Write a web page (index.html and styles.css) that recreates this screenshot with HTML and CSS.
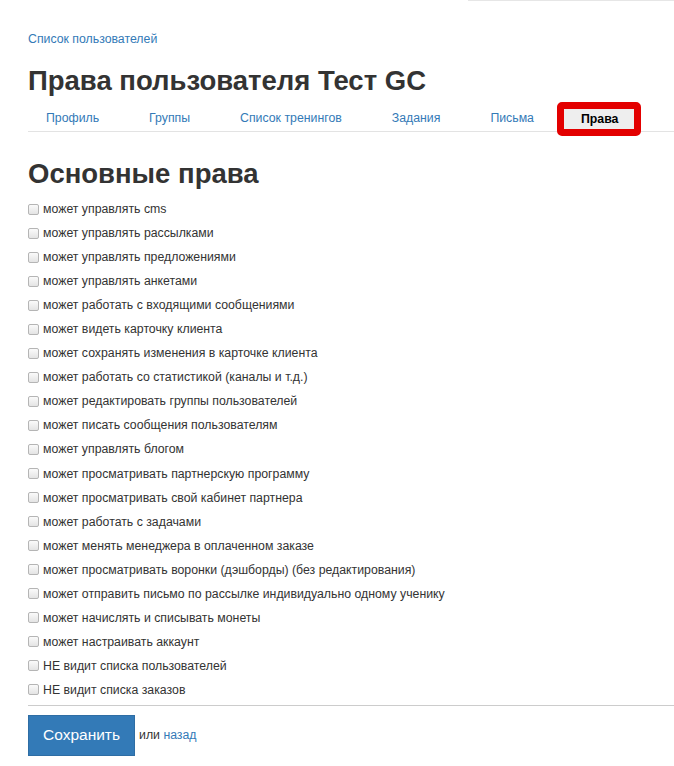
FILE: index.html
```html
<!DOCTYPE html>
<html lang="ru">
<head>
    <meta charset="UTF-8">
    <title>Права пользователя Тест GC</title>
    <link rel="stylesheet" href="styles.css">
</head>
<body>

    <div class="topline"></div>

    <div class="page">
        <a class="crumb" href="#">Список пользователей</a>

        <h1>Права пользователя Тест GC</h1>

        <!-- Вкладки -->
        <ul class="tabs">
            <li><a href="#">Профиль</a></li>
            <li><a href="#">Группы</a></li>
            <li><a href="#">Список тренингов</a></li>
            <li><a href="#">Задания</a></li>
            <li><a href="#">Письма</a></li>
            <li class="active"><a href="#">Права</a></li>
        </ul>

        <h2>Основные права</h2>

        <form class="rights">
            <label><input type="checkbox"> может управлять cms</label>
            <label><input type="checkbox"> может управлять рассылками</label>
            <label><input type="checkbox"> может управлять предложениями</label>
            <label><input type="checkbox"> может управлять анкетами</label>
            <label><input type="checkbox"> может работать с входящими сообщениями</label>
            <label><input type="checkbox"> может видеть карточку клиента</label>
            <label><input type="checkbox"> может сохранять изменения в карточке клиента</label>
            <label><input type="checkbox"> может работать со статистикой (каналы и т.д.)</label>
            <label><input type="checkbox"> может редактировать группы пользователей</label>
            <label><input type="checkbox"> может писать сообщения пользователям</label>
            <label><input type="checkbox"> может управлять блогом</label>
            <label><input type="checkbox"> может просматривать партнерскую программу</label>
            <label><input type="checkbox"> может просматривать свой кабинет партнера</label>
            <label><input type="checkbox"> может работать с задачами</label>
            <label><input type="checkbox"> может менять менеджера в оплаченном заказе</label>
            <label><input type="checkbox"> может просматривать воронки (дэшборды) (без редактирования)</label>
            <label><input type="checkbox"> может отправить письмо по рассылке индивидуально одному ученику</label>
            <label><input type="checkbox"> может начислять и списывать монеты</label>
            <label><input type="checkbox"> может настраивать аккаунт</label>
            <label><input type="checkbox"> НЕ видит списка пользователей</label>
            <label><input type="checkbox"> НЕ видит списка заказов</label>

            <div class="actions">
                <button type="button">Сохранить</button>
                <span class="or">или <a href="#">назад</a></span>
            </div>
        </form>
    </div>

</body>
</html>
```

FILE: styles.css
```css
body {
    margin: 0;
    font-family: "Liberation Sans", Arial, sans-serif;
    font-size: 12.3px;
    color: #333;
    background: #fff;
}

a {
    color: #337ab7;
    text-decoration: none;
}

.topline {
    width: 206px;
    height: 1px;
    margin-left: auto;
    background: #e6e6e6;
}

.page {
    padding: 30px 0 0 28px;
}

.crumb {
    display: block;
    line-height: 16px;
}

h1 {
    margin: 19px 0 0;
    font-size: 27.5px;
    line-height: 30px;
    font-weight: bold;
    color: #333;
}

.tabs {
    display: flex;
    align-items: flex-end;
    list-style: none;
    margin: 0;
    padding: 0 0 3px;
    height: 32px;
    border-bottom: 1px solid #e3e3e3;
}

.tabs li {
    margin-right: 14px;
}

.tabs a {
    display: block;
    padding: 0 18px;
    line-height: 20px;
}

.tabs .active {
    margin: 0 0 -8px -9px;
    border: 7px solid #e30000;
    border-radius: 5px;
    background: #eee;
}

.tabs .active a {
    padding: 0 16px 0 17px;
    color: #000;
    font-weight: bold;
}

h2 {
    margin: 26px 0 0;
    font-size: 27.5px;
    line-height: 32px;
    font-weight: bold;
    color: #333;
}

.rights {
    margin-top: 7px;
}

.rights label {
    display: flex;
    align-items: center;
    height: 24.05px;
}

.rights input {
    appearance: none;
    width: 11px;
    height: 11px;
    margin: 0 4px 0 0;
    border: 1px solid #b5b5b5;
    border-radius: 2px;
    background: linear-gradient(#fafafa, #e4e4e4);
}

.actions {
    display: flex;
    align-items: center;
    margin-top: 3px;
    padding-top: 9px;
    border-top: 1px solid #ccc;
}

.actions button {
    padding: 0 14px;
    height: 41px;
    border: 1px solid #2e6da4;
    background: #337ab7;
    color: #fff;
    font-family: inherit;
    font-size: 15.5px;
}

.or {
    margin-left: 4px;
}
```
